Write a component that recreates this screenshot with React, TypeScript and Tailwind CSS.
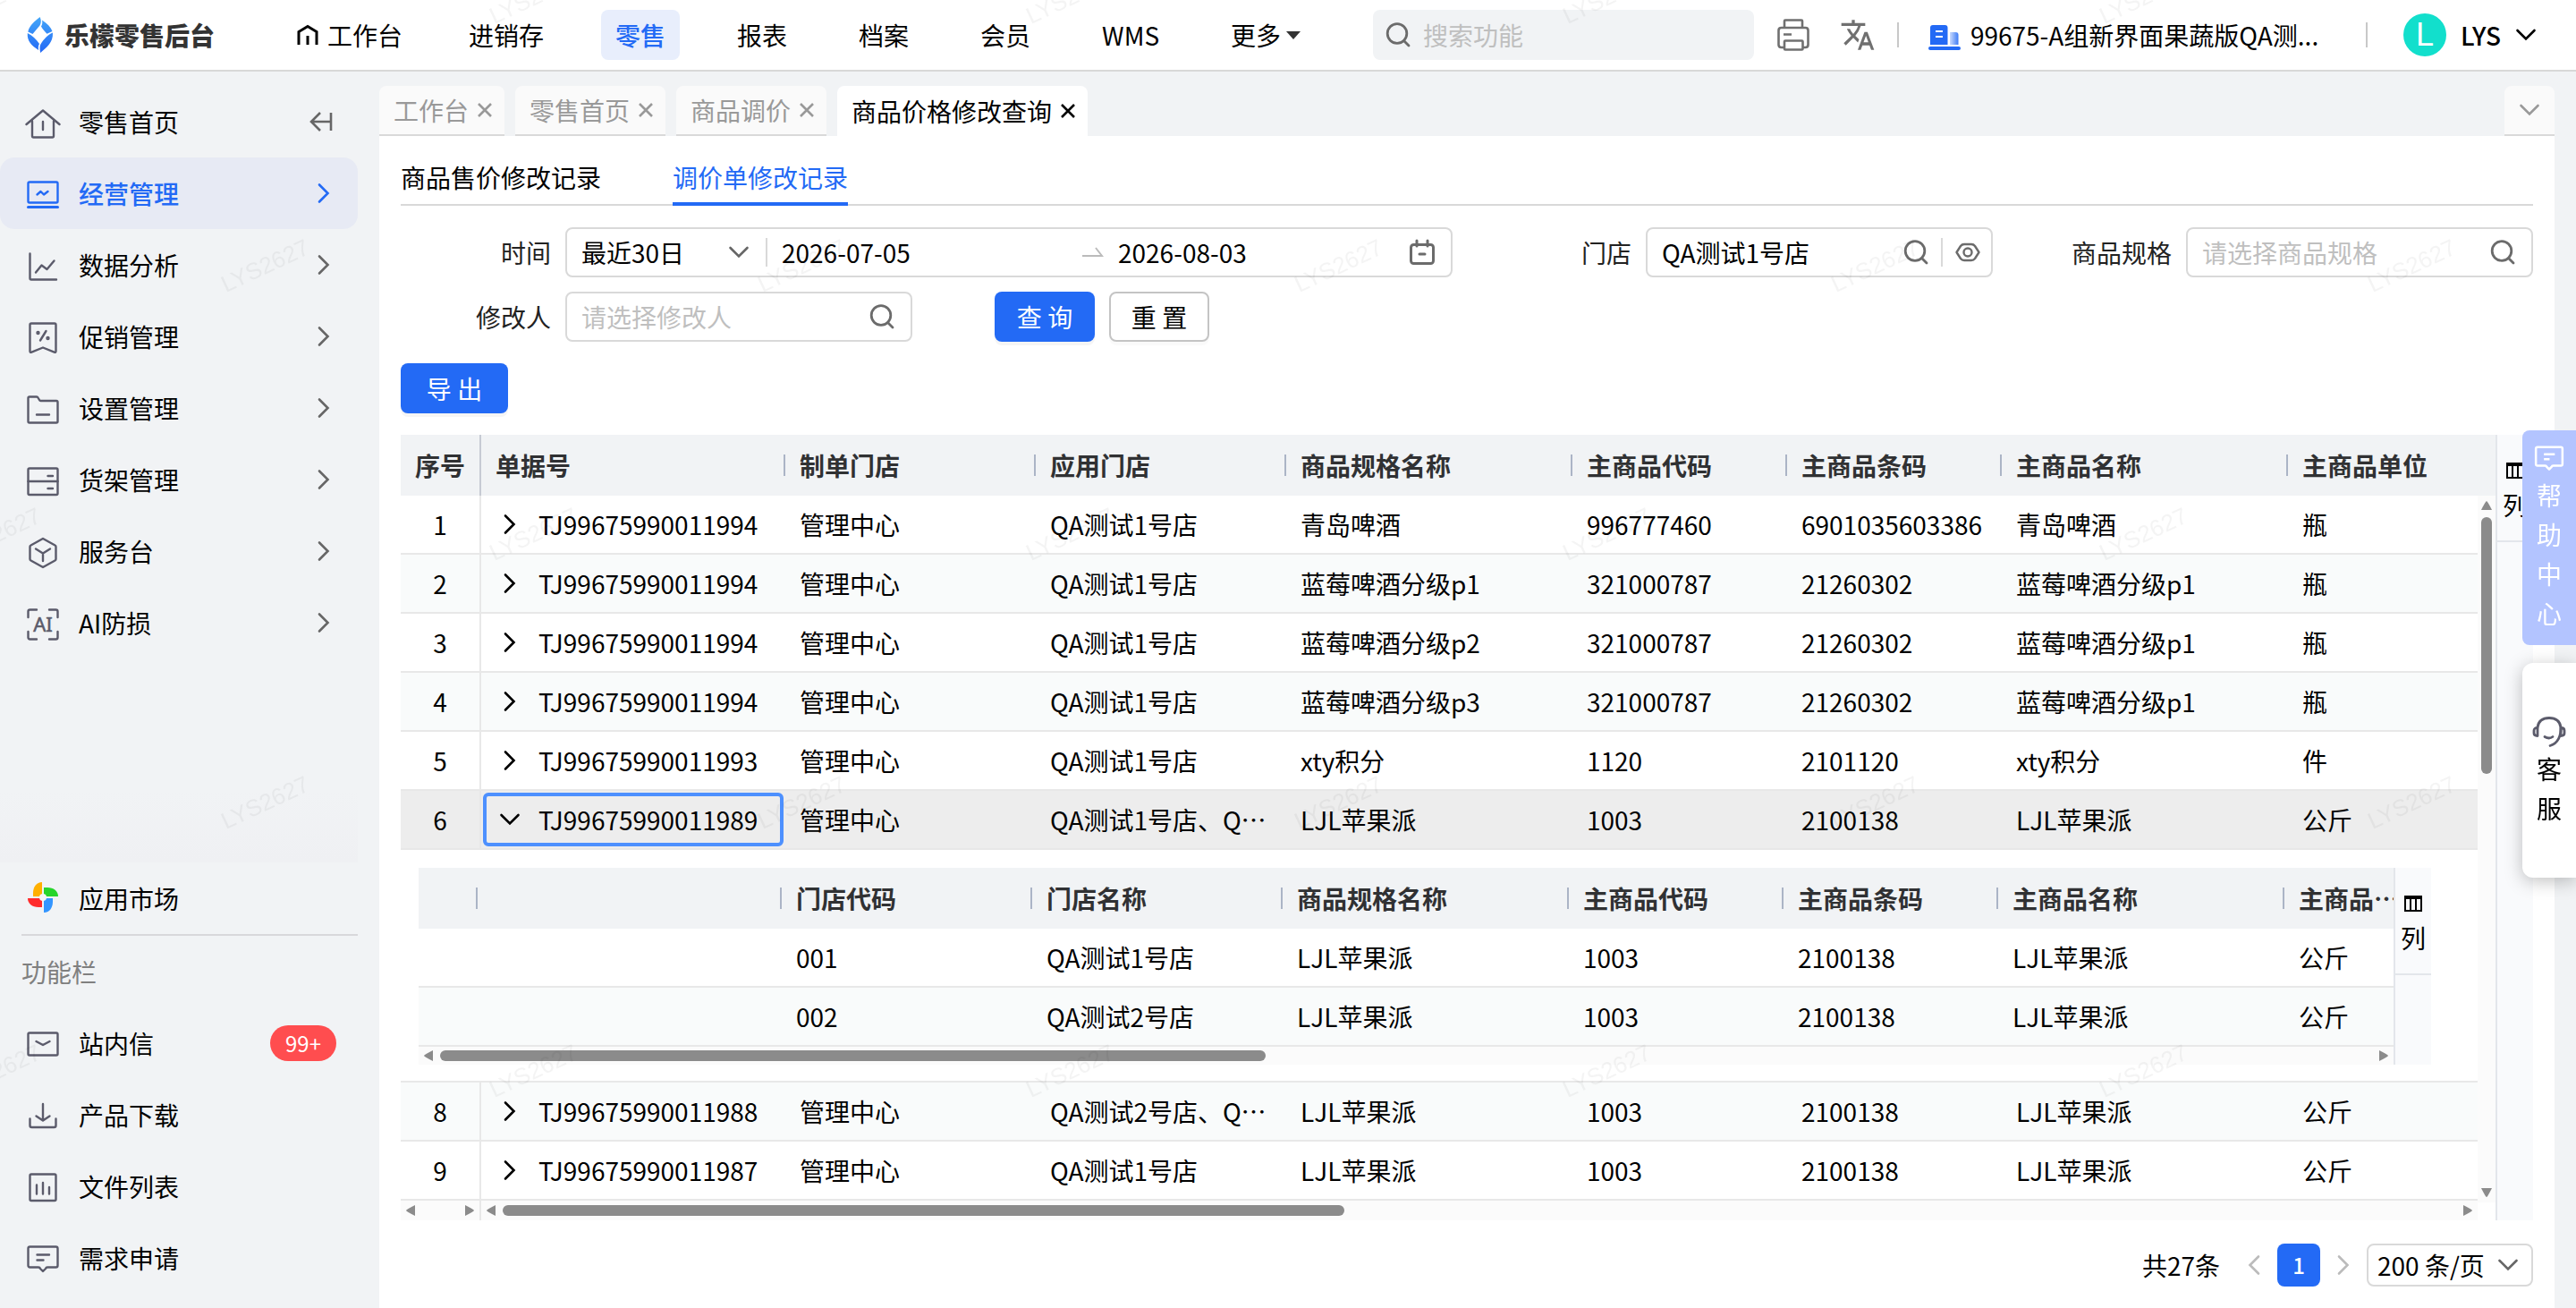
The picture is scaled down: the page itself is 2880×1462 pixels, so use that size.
import type { ReactNode } from "react";
import clsx from "clsx";
import { MdTranslate } from "react-icons/md";

const NAV_ITEMS = ["进销存", "零售", "报表", "档案", "会员", "WMS"];

const PAGE_TABS = ["工作台", "零售首页", "商品调价", "商品价格修改查询"];

const COLUMNS = ["制单门店", "应用门店", "商品规格名称", "主商品代码", "主商品条码", "主商品名称"];

const SUB_COLUMNS = ["", "门店代码", "门店名称", "商品规格名称", "主商品代码", "主商品条码", "主商品名称"];

interface Row {
  no: number;
  bill: string;
  cells: string[];
}

const ROWS: Row[] = [
  { no: 1, bill: "TJ99675990011994", cells: ["管理中心", "QA测试1号店", "青岛啤酒", "996777460", "6901035603386", "青岛啤酒", "瓶"] },
  { no: 2, bill: "TJ99675990011994", cells: ["管理中心", "QA测试1号店", "蓝莓啤酒分级p1", "321000787", "21260302", "蓝莓啤酒分级p1", "瓶"] },
  { no: 3, bill: "TJ99675990011994", cells: ["管理中心", "QA测试1号店", "蓝莓啤酒分级p2", "321000787", "21260302", "蓝莓啤酒分级p1", "瓶"] },
  { no: 4, bill: "TJ99675990011994", cells: ["管理中心", "QA测试1号店", "蓝莓啤酒分级p3", "321000787", "21260302", "蓝莓啤酒分级p1", "瓶"] },
  { no: 5, bill: "TJ99675990011993", cells: ["管理中心", "QA测试1号店", "xty积分", "1120", "2101120", "xty积分", "件"] },
  { no: 6, bill: "TJ99675990011989", cells: ["管理中心", "QA测试1号店、QA测试2号店", "LJL苹果派", "1003", "2100138", "LJL苹果派", "公斤"] },
  { no: 8, bill: "TJ99675990011988", cells: ["管理中心", "QA测试2号店、QA测试1号店", "LJL苹果派", "1003", "2100138", "LJL苹果派", "公斤"] },
  { no: 9, bill: "TJ99675990011987", cells: ["管理中心", "QA测试1号店", "LJL苹果派", "1003", "2100138", "LJL苹果派", "公斤"] },
];

const SUB_ROWS = [
  ["001", "QA测试1号店", "LJL苹果派", "1003", "2100138", "LJL苹果派", "公斤"],
  ["002", "QA测试2号店", "LJL苹果派", "1003", "2100138", "LJL苹果派", "公斤"],
];

const EXPANDED = 6;

/* ---------- icons ---------- */

function Chevron({ className }: { className?: string }) {
  return (
    <svg viewBox="0 0 24 24" className={clsx("size-6 shrink-0", className)} fill="none" stroke="currentColor" strokeWidth="2.6" strokeLinecap="round">
      <path d="M7 2.5 16.5 12 7 21.5" />
    </svg>
  );
}

function SearchIcon() {
  return (
    <svg viewBox="0 0 32 32" className="size-8 shrink-0 text-[#6b6b6b]" fill="none" stroke="currentColor" strokeWidth="2.8" strokeLinecap="round">
      <circle cx="15" cy="14.5" r="10.8" />
      <path d="m22.5 22.5 5.5 5.5" />
    </svg>
  );
}

function MenuSvg({ children }: { children: ReactNode }) {
  return (
    <svg viewBox="0 0 40 40" className="size-10 shrink-0" fill="none" stroke="currentColor" strokeWidth="2.4" strokeLinecap="round" strokeLinejoin="round">
      {children}
    </svg>
  );
}

const ICONS: Record<string, ReactNode> = {
  零售首页: <path d="M1.5 23 20 7.5 38.5 23M8 19.5V36q0 1.5 1.5 1.5h21q1.5 0 1.5-1.5V19.5M20 20v9" />,
  经营管理: (
    <>
      <rect x="3.5" y="7.5" width="33" height="23" rx="1.5" />
      <path d="m13.5 21.5 4-3.5 3.5 3.5 4.5-3.5" />
      <path d="M3.5 35.5h33" strokeWidth="3" />
    </>
  ),
  数据分析: <path d="M5.5 7.5V35q0 1.5 1.5 1.5h28M12 28.5l6.5-8 6 4.5 8-9.5" />,
  促销管理: (
    <>
      <path d="M7 5.5h26q1.5 0 1.5 1.5v29.5q0 1.8-1.8 1.2L20 32.5 7.3 37.7q-1.8.6-1.8-1.2V7q0-1.5 1.5-1.5zM23.5 14 17 24.5" />
      <circle cx="14.5" cy="16" r="1" />
      <circle cx="25.5" cy="22" r="1" />
    </>
  ),
  设置管理: <path d="M5 7.5h8q1 0 1.5 1l1.5 2.5q.5 1 1.5 1H35q1.500 0 1.500 1.500V35q0 1.500-1.500 1.500H5q-1.500 0-1.500-1.500V9q0-1.500 1.500-1.500zM13 27.500h14" />,
  货架管理: (
    <>
      <rect x="3.5" y="7.5" width="33" height="29.5" rx="1.5" />
      <path d="M3.5 22h33M25.5 16H31M25.5 30H31" />
    </>
  ),
  服务台: <path d="m20 6 13.5 7.5q1 .5 1 1.5v14q0 1-1 1.5L20 38 6.500 30.500q-1-.5-1-1.500V15q0-1 1-1.500zM12 17.500l8 5 8-5M20 22.500V31" />,
  AI防损: (
    <>
      <path d="M3.5 14V7.5q0-2 2-2H13M27 5.500h7.500q2 0 2 2V14M36.500 30v6.500q0 2-2 2H27M13 38.500H5.500q-2 0-2-2V30" />
      <text x="20" y="30" textAnchor="middle" fontSize="22" stroke="currentColor" strokeWidth="0.6" fill="currentColor" className="font-['Noto_Sans']">
        AI
      </text>
    </>
  ),
  应用市场: (
    <g stroke="none">
      <path d="M9 18v-4C9 7 13 2 19 2v16z" fill="#ffb000" />
      <path d="M21 18V8h4c7 0 12 4 12 10z" fill="#27d52b" />
      <path d="M21 20h10v4c0 7-4 12-10 12z" fill="#3395ff" />
      <path d="M19 20v10h-4C8 30 3 26 3 20z" fill="#ff2b2b" />
      <circle cx="20" cy="19" r="4" fill="#f4f4f6" />
    </g>
  ),
  站内信: (
    <>
      <rect x="3.5" y="8.5" width="33" height="25" rx="1.5" />
      <path d="m12.5 18 7.500 4 7.500-4" />
    </>
  ),
  产品下载: <path d="M20 8v18M12.500 21.500 20 26.500l7.500-5M5.500 24.500V32q0 2 2 2h25q2 0 2-2v-7.500" />,
  文件列表: (
    <>
      <rect x="5.5" y="6.5" width="29" height="29.5" rx="1.5" />
      <path d="M13 18.500v10M20 16v12.500M27 21v7.500" />
    </>
  ),
  需求申请: <path d="M5.500 7.500h29q2 0 2 2v19q0 2-2 2H25q-1.500 0-2 1.500l-3 3-3-3q-.5-1.500-2-1.500H5.500q-2 0-2-2v-19q0-2 2-2zM13.500 16.500H27M13.500 22.500h7" />,
};

function ColumnsIcon() {
  return (
    <svg viewBox="0 0 22 20" className="h-5 w-[22px] shrink-0" fill="none" stroke="currentColor" strokeWidth="2">
      <path d="M2 2h18v16H2zM8 2v16M14 2v16M2 4h18" />
    </svg>
  );
}

function Logo() {
  return (
    <svg viewBox="0 0 30 40" className="h-10 w-[30px] shrink-0" fill="none">
      <defs>
        <linearGradient id="logo" gradientUnits="userSpaceOnUse" x1="0" y1="0" x2="0" y2="40">
          <stop offset="0" stopColor="#43a6f8" />
          <stop offset="1" stopColor="#2469f6" />
        </linearGradient>
      </defs>
      <g fill="url(#logo)">
        <path d="M14.600 0C16 3 16.500 6 14.500 9.500 11.500 13 9.500 15.500 6.500 19L1.300 16.500C3 9 9 4.500 14.600 0z" />
        <path d="M17 3.500C23 7.500 27 11.500 28.500 16l-6 2.800C20 16 17.500 13.500 16 10.500 17.500 8 17.500 6 17 3.500z" />
        <path d="M29 17.500C29.500 29 22 34 15.200 40 14.500 36 14 32 16 29.500 19 25 23 20 29 17.500z" />
        <path d="M.8 18C6 20.500 10.500 25 14 30c-1.500 2.500-1.200 4.500-1 7C5.500 32 0 27 .8 18z" />
      </g>
      <path d="m15 12 7 8-7 8.500L8 20z" fill="#fff" />
    </svg>
  );
}

/* ---------- header ---------- */

function Header() {
  return (
    <header className="flex h-20 shrink-0 items-center border-b-2 border-[#d8d8d8] bg-white pr-11">
      <a href="#" className="flex w-[314px] shrink-0 items-center gap-3 pl-[30px] font-black text-[#333]">
        <Logo />
        乐檬零售后台
      </a>
      <nav className="flex items-center gap-12 whitespace-nowrap">
        <a href="#" className="flex h-14 items-center gap-2 pr-[10px] pl-4">
          <svg viewBox="0 0 28 28" className="size-7" fill="none" stroke="currentColor" strokeWidth="3">
            <path d="M4 25V10.500L14 4.500l10 6V25M14 15v10" />
          </svg>
          工作台
        </a>
        {NAV_ITEMS.map((item) => (
          <a key={item} href="#" className={clsx("flex h-14 items-center rounded-lg px-4", item === "零售" && "bg-[#e8eefc] font-medium text-[#236af5]")}>
            {item}
          </a>
        ))}
        <button type="button" className="flex h-14 items-center gap-1.5 pl-4">
          更多
          <svg viewBox="0 0 16 10" className="h-[10px] w-4" fill="#333">
            <path d="M0 1h16L8 10z" />
          </svg>
        </button>
      </nav>

      <div className="ml-auto flex h-14 w-[426px] items-center gap-3 rounded-lg bg-[#f1f3f5] px-3">
        <SearchIcon />
        <input aria-label="搜索功能" placeholder="搜索功能" className="min-w-0 flex-1 bg-transparent outline-none placeholder:text-[#bfbfbf]" />
      </div>
      <button type="button" aria-label="打印" className="ml-6 text-[#707070]">
        <svg viewBox="0 0 40 40" className="size-10" fill="none" stroke="currentColor" strokeWidth="2.6" strokeLinejoin="round">
          <path d="M10 12V4.500q0-1 1-1h18q1 0 1 1V12M9.500 34h-3q-3 0-3-3V15q0-3 3-3h27q3 0 3 3v16q0 3-3 3h-3M9 19.500h9" />
          <rect x="10" y="26.5" width="20.5" height="10" rx="1" />
        </svg>
      </button>
      <button type="button" aria-label="语言" className="ml-8 text-[#707070]">
        <MdTranslate size={40} />
      </button>
      <span className="ml-6 h-7 w-0.5 bg-[#c8c8c8]" />
      <button type="button" className="ml-8 flex w-[490px] items-center gap-[10px] whitespace-nowrap">
        <svg viewBox="0 0 38 40" className="h-10 w-[38px] shrink-0">
          <defs>
            <linearGradient id="tower">
              <stop offset="0" stopColor="#c9dafd" />
              <stop offset="1" stopColor="#3f7df6" />
            </linearGradient>
          </defs>
          <path d="M3 31V12q0-3 3-3h13.500q3 0 3 3v19z" fill="#236af5" />
          <path d="M9 16h8M9 22h8" stroke="#fff" strokeWidth="2" />
          <path d="M25 17h6.500q3 0 3 3v11H25z" fill="url(#tower)" />
          <rect x="1" y="33" width="36" height="4" rx="2" fill="#236af5" />
        </svg>
        99675-A组新界面果蔬版QA测...
      </button>
      <span className="h-7 w-0.5 bg-[#c8c8c8]" />
      <button type="button" className="ml-10 flex items-center gap-4 font-medium">
        <span className="flex size-12 items-center justify-center rounded-full bg-[#12dfcc] font-['Liberation_Sans'] text-4xl font-normal text-white">L</span>
        <span>LYS</span>
        <Chevron className="rotate-90" />
      </button>
    </header>
  );
}

/* ---------- sidebar ---------- */

function MenuItem({ label, active, right }: { label: string; active?: boolean; right?: ReactNode }) {
  return (
    <a href="#" className={clsx("flex h-20 items-center gap-5 rounded-2xl pr-6 pl-7", active ? "bg-[#e7eaf4] text-[#236af5]" : "text-[#5b5b6b]")}>
      <MenuSvg>{ICONS[label]}</MenuSvg>
      <span className={clsx("flex-1", active ? "font-medium" : "text-black")}>{label}</span>
      {right}
    </a>
  );
}

function Sidebar() {
  return (
    <aside className="flex w-[424px] shrink-0 flex-col pr-6">
      <div className="flex-1 pt-4">
        <MenuItem
          label="零售首页"
          right={
            <svg viewBox="0 0 28 28" className="mr-1 size-7 text-[#666]" fill="none" stroke="currentColor" strokeWidth="2.6">
              <path d="M26 4v20M3.500 14H26M14 4 4 14l10 10" />
            </svg>
          }
        />
        <MenuItem label="经营管理" active right={<Chevron className="mr-0.5" />} />
        {["数据分析", "促销管理", "设置管理", "货架管理", "服务台", "AI防损"].map((label) => (
          <MenuItem key={label} label={label} right={<Chevron className="mr-0.5 text-[#666]" />} />
        ))}
      </div>
      <div className="h-20 bg-linear-to-b from-transparent to-[#eff0f3]" />
      <div className="pb-4">
        <MenuItem label="应用市场" />
        <h2 className="ml-6 flex h-[82px] items-center border-t-2 border-[#d8d8db] text-[#808080]">功能栏</h2>
        <MenuItem
          label="站内信"
          right={<span className="flex h-10 w-[74px] items-center justify-center rounded-full bg-[#ff4d4f] text-2xl text-white">99+</span>}
        />
        {["产品下载", "文件列表", "需求申请"].map((label) => (
          <MenuItem key={label} label={label} />
        ))}
      </div>
    </aside>
  );
}

/* ---------- filters ---------- */

function Field({ id, label, wide, children }: { id: string; label: string; wide?: boolean; children: ReactNode }) {
  return (
    <div className={clsx("flex items-center gap-4", wide && "col-span-2")}>
      <label htmlFor={id} className="w-[168px] shrink-0 text-right text-[#222]">
        {label}
      </label>
      <div className="flex h-14 min-w-0 flex-1 items-center rounded-lg border-2 border-[#d9d9d9] bg-white px-4">{children}</div>
    </div>
  );
}

const inputClass = "min-w-0 flex-1 bg-transparent outline-none placeholder:text-[#bfbfbf]";

function Filters() {
  return (
    <form className="mt-6 grid grid-cols-4 gap-x-8 gap-y-4">
      <Field id="range" label="时间" wide>
        <div className="relative flex h-8 w-[208px] items-center border-r-2 border-[#d9d9d9]">
          <select id="range" className="w-full appearance-none bg-transparent outline-none">
            <option>最近30日</option>
          </select>
          <Chevron className="pointer-events-none absolute right-[18px] rotate-90 text-[#666]" />
        </div>
        <input aria-label="开始日期" defaultValue="2026-07-05" className="ml-4 w-[336px] min-w-0 bg-transparent outline-none" />
        <svg viewBox="0 0 24 24" className="size-6 shrink-0" fill="none" stroke="#bbb" strokeWidth="2">
          <path d="M0 16h22L15 7" />
        </svg>
        <input aria-label="结束日期" defaultValue="2026-08-03" className={clsx("ml-4", inputClass)} />
        <svg viewBox="0 0 32 32" className="size-8 shrink-0" fill="none" stroke="#6b6b6b" strokeWidth="3" strokeLinecap="round">
          <rect x="3.5" y="7.5" width="25" height="21" rx="3" />
          <path d="M10 3v6M22 3v6M13 18h6" />
        </svg>
      </Field>
      <Field id="store" label="门店">
        <input id="store" defaultValue="QA测试1号店" className={inputClass} />
        <SearchIcon />
        <span className="mx-3 h-8 w-0.5 shrink-0 bg-[#d9d9d9]" />
        <svg viewBox="0 0 32 32" className="-mr-1.5 size-8 shrink-0" fill="none" stroke="#6b6b6b" strokeWidth="2.4" strokeLinejoin="round">
          <path d="M3.500 16 8 9q1.500-2 4-2h8q2.500 0 4 2l4.500 7-4.500 7q-1.500 2-4 2h-8q-2.500 0-4-2z" />
          <circle cx="16" cy="16" r="4.5" />
        </svg>
      </Field>
      <Field id="spec" label="商品规格">
        <input id="spec" placeholder="请选择商品规格" className={inputClass} />
        <SearchIcon />
      </Field>
      <Field id="editor" label="修改人">
        <input id="editor" placeholder="请选择修改人" className={inputClass} />
        <SearchIcon />
      </Field>
      <div className="flex gap-4 pl-[60px]">
        <button type="button" className="h-14 w-28 rounded-lg bg-[#236af5] text-white shadow-[0_4px_0_rgba(0,0,0,0.04)]">
          查 询
        </button>
        <button type="button" className="h-14 w-28 rounded-lg border-2 border-[#c4c4c4] bg-white shadow-[0_4px_0_rgba(0,0,0,0.02)]">
          重 置
        </button>
      </div>
    </form>
  );
}

/* ---------- table ---------- */

function Arrow({ className }: { className?: string }) {
  return (
    <svg viewBox="0 0 10 12" className={clsx("h-3 w-[10px] shrink-0", className)} fill="#8b8b8b">
      <path d="M10 0v12Q0 7 0 6t10-6z" />
    </svg>
  );
}

function HScroll({ thumb, className }: { thumb?: string; className?: string }) {
  return (
    <div className={clsx("flex items-center justify-between bg-[#fbfbfb] px-[6px]", className)}>
      <Arrow />
      <div className="flex flex-1 px-2">{thumb && <div className={clsx("h-3 rounded-full bg-[#8b8b8b]", thumb)} />}</div>
      <Arrow className="rotate-180" />
    </div>
  );
}

function SidePanel() {
  return (
    <div className="w-[42px] shrink-0 border-l-2 border-[#e3e6eb] bg-[#f9fafc]">
      <button type="button" className="flex h-[120px] w-full flex-col items-center gap-2 border-b-2 border-[#e3e6eb] pt-[30px] leading-10">
        <ColumnsIcon />列
      </button>
    </div>
  );
}

function HeadCell({ children, bar = true }: { children: ReactNode; bar?: boolean }) {
  return (
    <th scope="col" className="h-[68px] bg-[#f1f3f5] p-0 pl-4 text-left font-bold text-[#303133]">
      <div className="flex items-center justify-between">
        <span className="truncate">{children}</span>
        {bar && <span className="h-6 w-0.5 shrink-0 bg-[#abb4c6]" />}
      </div>
    </th>
  );
}

const cellClass = "h-[66px] truncate border-b-2 border-[#e8e8e8] px-4 py-0";

function SubTable() {
  return (
    <div className="flex">
      <div className="min-w-0 flex-1 overflow-hidden">
        <table className="w-[2222px] table-fixed border-separate border-spacing-0">
          <colgroup>
            <col className="w-[66px]" />
            <col className="w-[340px]" />
            <col className="w-[280px]" />
            <col className="w-[280px]" />
            <col className="w-[320px]" />
            <col className="w-[240px]" />
            <col className="w-[240px]" />
            <col className="w-[320px]" />
            <col className="w-[136px]" />
          </colgroup>
          <thead>
            <tr>
              <HeadCell>{""}</HeadCell>
              {SUB_COLUMNS.map((name) => (
                <HeadCell key={name}>{name}</HeadCell>
              ))}
              <HeadCell bar={false}>主商品单位</HeadCell>
            </tr>
          </thead>
          <tbody>
            {SUB_ROWS.map((cells, i) => (
              <tr key={cells[0]} className={clsx(i % 2 === 1 && "bg-[#f9fbfb]")}>
                <td className={cellClass} />
                <td className={cellClass} />
                {cells.map((cell, j) => (
                  <td key={j} className={cellClass}>
                    {cell}
                  </td>
                ))}
              </tr>
            ))}
          </tbody>
        </table>
        <HScroll className="h-5" thumb="w-[923px]" />
      </div>
      <SidePanel />
    </div>
  );
}

function BillRow({ row }: { row: Row }) {
  const open = row.no === EXPANDED;
  return (
    <>
      <tr className={clsx(open ? "bg-[#ededed]" : row.no % 2 === 0 && "bg-[#f9fbfb]")}>
        <td className="h-[66px] border-r-2 border-b-2 border-[#e8e8e8] p-0 text-center">{row.no}</td>
        <td className="h-[66px] border-b-2 border-[#e8e8e8] p-0">
          <div className={clsx("mx-0.5 flex h-[60px] items-center rounded-md border-4 pl-[10px]", open ? "border-[#4d90fe]" : "border-transparent")}>
            <button type="button" aria-expanded={open} aria-label="展开" className="flex w-8 justify-center">
              <Chevron className={clsx(open && "rotate-90")} />
            </button>
            <span className="ml-4">{row.bill}</span>
          </div>
        </td>
        {row.cells.map((cell, i) => (
          <td key={i} className={cellClass}>
            {cell}
          </td>
        ))}
      </tr>
      {open && (
        <tr>
          <td colSpan={9} className="border-b-2 border-[#e8e8e8] pt-5 pr-[72px] pb-[18px] pl-5">
            <SubTable />
          </td>
        </tr>
      )}
    </>
  );
}

function BillTable() {
  return (
    <div className="mt-6 flex">
      <div className="relative min-w-0 flex-1 overflow-hidden">
        <table className="w-full table-fixed border-separate border-spacing-0">
          <colgroup>
            <col className="w-[90px]" />
            <col className="w-[340px]" />
            <col className="w-[280px]" />
            <col className="w-[280px]" />
            <col className="w-[320px]" />
            <col className="w-[240px]" />
            <col className="w-[240px]" />
            <col className="w-[320px]" />
            <col />
          </colgroup>
          <thead>
            <tr>
              <th scope="col" className="h-[68px] border-r-2 border-[#c6cad3] bg-[#f1f3f5] p-0 text-center font-bold text-[#303133]">
                序号
              </th>
              <HeadCell>单据号</HeadCell>
              {COLUMNS.map((name) => (
                <HeadCell key={name}>{name}</HeadCell>
              ))}
              <HeadCell bar={false}>主商品单位</HeadCell>
            </tr>
          </thead>
          <tbody>
            {ROWS.map((row) => (
              <BillRow key={row.no} row={row} />
            ))}
          </tbody>
        </table>
        <div className="flex h-[22px] pr-5">
          <HScroll className="w-[90px] border-r-2 border-[#e8e8e8]" />
          <HScroll className="flex-1" thumb="w-[941px]" />
        </div>
        {/* vertical scrollbar over the row ends */}
        <div className="absolute top-[68px] right-0 bottom-5 flex w-5 flex-col items-center bg-[#fbfbfb] py-[5px]">
          <Arrow className="rotate-90" />
          <div className="flex w-3 flex-1 flex-col py-[7px]">
            <div className="h-[287px] rounded-full bg-[#8b8b8b]" />
          </div>
          <Arrow className="-rotate-90" />
        </div>
      </div>
      <SidePanel />
    </div>
  );
}

function Pagination() {
  return (
    <div className="mt-[26px] flex items-center justify-end">
      <span>共27条</span>
      <button type="button" aria-label="上一页" className="ml-[26px] text-[#bbb]">
        <Chevron className="rotate-180" />
      </button>
      <button type="button" className="mx-[14px] size-12 rounded-lg bg-[#236af5] text-2xl font-medium text-white">
        1
      </button>
      <button type="button" aria-label="下一页" className="mr-[14px] text-[#bbb]">
        <Chevron />
      </button>
      <div className="relative flex h-12 w-[186px] items-center rounded-lg border-2 border-[#d9d9d9]">
        <select aria-label="每页条数" className="w-full appearance-none bg-transparent pl-[10px] outline-none">
          <option>200 条/页</option>
        </select>
        <Chevron className="pointer-events-none absolute right-[14px] rotate-90 text-[#666]" />
      </div>
    </div>
  );
}

/* ---------- floating widgets ---------- */

function FloatingHelp() {
  return (
    <div className="fixed top-[481px] right-0 flex w-[60px] flex-col gap-5 text-center leading-[44px]">
      <button type="button" className="flex h-60 flex-col items-center rounded-l-lg bg-[#b3c4ff] pt-3 text-white">
        <svg viewBox="0 0 40 40" className="mb-0.5 size-9 shrink-0" fill="none" stroke="currentColor" strokeWidth="2.8" strokeLinejoin="round">
          {ICONS["需求申请"]}
        </svg>
        <span className="w-7">帮助中心</span>
      </button>
      <button type="button" className="flex h-60 flex-col items-center rounded-l-xl bg-white pt-[56px] shadow-[0_4px_20px_rgba(0,0,0,0.25)]">
        <svg viewBox="0 0 40 40" className="size-10 shrink-0" fill="none" stroke="#5b5b6b" strokeWidth="2.8" strokeLinecap="round">
          <path d="M7 16C8 9 13 5.500 20 5.500S32 9 33 16c.5 9-3 18-12 20.500M15 26.500q5 3 9 0" />
          <path d="M7 16.500q-4 0-4 3v3q0 3 4 3zM33 16.500q4 0 4 3v3q0 3-4 3z" strokeLinejoin="round" />
        </svg>
        <span className="w-7">客服</span>
      </button>
    </div>
  );
}

function Watermark() {
  return (
    <svg className="pointer-events-none fixed inset-0 h-full w-full" aria-hidden="true">
      <defs>
        <pattern id="mark" width="600" height="600" patternUnits="userSpaceOnUse">
          <g fill="#000" fillOpacity="0.045" fontSize="26" textAnchor="middle" className="font-['Liberation_Sans']">
            <text transform="translate(300 305) rotate(-25)">LYS2627</text>
            <text transform="translate(600 5) rotate(-25)">LYS2627</text>
            <text transform="translate(0 5) rotate(-25)">LYS2627</text>
            <text transform="translate(600 605) rotate(-25)">LYS2627</text>
            <text transform="translate(0 605) rotate(-25)">LYS2627</text>
          </g>
        </pattern>
      </defs>
      <rect width="100%" height="100%" fill="url(#mark)" />
    </svg>
  );
}

export default function App() {
  return (
    <div lang="zh-CN" className="flex min-h-screen flex-col bg-[#f1f3f5] font-['Noto_Sans_CJK_SC',sans-serif] text-[28px] leading-10 text-black">
      <Header />
      <div className="flex flex-1">
        <Sidebar />
        <main className="min-w-0 flex-1 pt-4 pr-6">
          <div className="flex h-14 gap-3">
            {PAGE_TABS.map((tab, i) => {
              const active = i === PAGE_TABS.length - 1;
              return (
                <div
                  key={tab}
                  className={clsx("flex items-center gap-2 rounded-t-lg pr-3 pl-4", active ? "bg-white" : "border-b-2 border-[#d9d9d9] bg-[#fafafa] text-[#999]")}
                >
                  <a href="#">{tab}</a>
                  <button type="button" aria-label="关闭">
                    <svg viewBox="0 0 20 20" className="size-5" stroke="currentColor" strokeWidth="2.6">
                      <path d="m3 3 14 14M17 3 3 17" />
                    </svg>
                  </button>
                </div>
              );
            })}
            <button type="button" aria-label="更多标签" className="ml-auto flex w-14 items-center justify-center rounded-t-lg border-b-2 border-[#d9d9d9] bg-[#fafafa] text-[#999]">
              <Chevron className="rotate-90" />
            </button>
          </div>
          <section className="bg-white px-6 pb-6">
            <div className="flex h-[78px] gap-20 border-b-2 border-[#d9d9d9]">
              <a href="#" className="pt-[26px]">
                商品售价修改记录
              </a>
              <a href="#" className="-mb-0.5 border-b-4 border-[#236af5] pt-[26px] text-[#236af5]">
                调价单修改记录
              </a>
            </div>
            <Filters />
            <button type="button" className="mt-6 h-14 w-[120px] rounded-lg bg-[#236af5] text-white shadow-[0_4px_0_rgba(0,0,0,0.04)]">
              导 出
            </button>
            <BillTable />
            <Pagination />
          </section>
        </main>
      </div>
      <Watermark />
      <FloatingHelp />
    </div>
  );
}
